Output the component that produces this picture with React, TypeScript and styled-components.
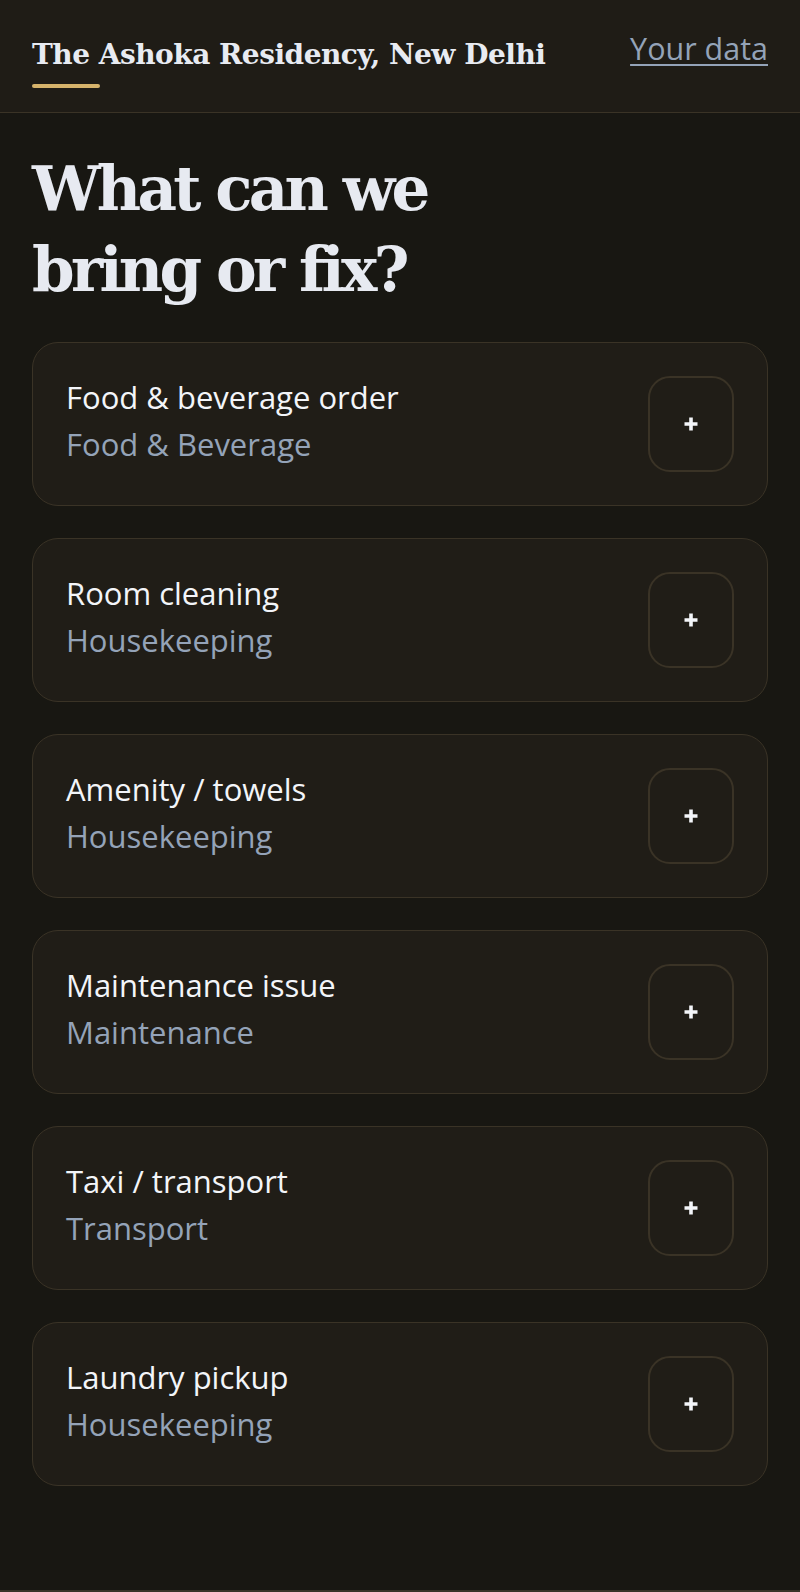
import React from "react";
import styled, { createGlobalStyle } from "styled-components";

const Global = createGlobalStyle`
  html, body { margin: 0; padding: 0; background: #181712; }
  body { font-family: "Open Sans", "Noto Sans", sans-serif; color: #eef1f6; }
  * { box-sizing: border-box; }
`;

const Page = styled.div`
  min-height: 1592px;
  display: flex;
  flex-direction: column;
  background: #181712;
`;

const Header = styled.header`
  height: 113px;
  background: #1f1c16;
  border-bottom: 1px solid #3a3326;
  padding: 0 32px;
  display: flex;
  justify-content: space-between;
  align-items: flex-start;
`;

const Brand = styled.div`
  padding-top: 35px;
  display: flex;
  flex-direction: column;
  gap: 9px;
`;

const BrandName = styled.div`
  font-family: "DejaVu Serif", serif;
  font-weight: 700;
  font-size: 28px;
  line-height: 40px;
  letter-spacing: -0.5px;
  color: #e8ebf2;
`;

const GoldBar = styled.span`
  display: block;
  width: 68px;
  height: 4px;
  border-radius: 2px;
  background: #d6b36b;
`;

const DataLink = styled.a`
  margin-top: 28px;
  font-family: "Open Sans", sans-serif;
  font-size: 30.5px;
  line-height: 40px;
  color: #94a3b8;
  text-decoration: underline;
  text-underline-offset: 4px;
  text-decoration-thickness: 2px;
`;

const Main = styled.main`
  flex: 1;
  padding: 35px 32px 102px;
`;

const Heading = styled.h1`
  margin: 0 0 32px;
  max-width: 480px;
  font-family: "DejaVu Serif", serif;
  font-weight: 700;
  font-size: 61px;
  line-height: 81px;
  letter-spacing: -3.7px;
  color: #e7eaf1;
`;

const List = styled.div`
  display: flex;
  flex-direction: column;
  gap: 32px;
`;

const Card = styled.div`
  display: flex;
  align-items: center;
  justify-content: space-between;
  padding: 33px;
  background: #201d17;
  border: 1px solid #3a3326;
  border-radius: 26px;
`;

const Texts = styled.div`
  display: flex;
  flex-direction: column;
`;

const Title = styled.div`
  font-size: 31px;
  line-height: 41px;
  color: #f3f5f9;
`;

const Sub = styled.div`
  font-size: 31px;
  line-height: 53px;
  color: #94a3b8;
`;

const AddButton = styled.button`
  width: 86px;
  height: 96px;
  border: 2px solid #3a3326;
  border-radius: 22px;
  background: transparent;
  display: flex;
  align-items: center;
  justify-content: center;
  padding: 0;
  cursor: pointer;
`;

const Footer = styled.footer`
  height: 2px;
  border-top: 2px solid #3a3326;
`;

const items = [
  { title: "Food & beverage order", cat: "Food & Beverage" },
  { title: "Room cleaning", cat: "Housekeeping" },
  { title: "Amenity / towels", cat: "Housekeeping" },
  { title: "Maintenance issue", cat: "Maintenance" },
  { title: "Taxi / transport", cat: "Transport" },
  { title: "Laundry pickup", cat: "Housekeeping" },
];

const Plus = () => (
  <svg width="16" height="16" viewBox="0 0 16 16" aria-hidden="true">
    <path d="M8 1.5v13M1.5 8h13" stroke="#f3f5f9" strokeWidth="3.6" strokeLinecap="butt" />
  </svg>
);

export default function App() {
  return (
    <>
      <Global />
      <Page>
        <Header>
          <Brand>
            <BrandName>The Ashoka Residency, New Delhi</BrandName>
            <GoldBar />
          </Brand>
          <DataLink href="#">Your data</DataLink>
        </Header>
        <Main>
          <Heading>What can we bring or fix?</Heading>
          <List>
            {items.map((it) => (
              <Card key={it.title}>
                <Texts>
                  <Title>{it.title}</Title>
                  <Sub>{it.cat}</Sub>
                </Texts>
                <AddButton aria-label={`Add ${it.title}`}>
                  <Plus />
                </AddButton>
              </Card>
            ))}
          </List>
        </Main>
        <Footer />
      </Page>
    </>
  );
}
